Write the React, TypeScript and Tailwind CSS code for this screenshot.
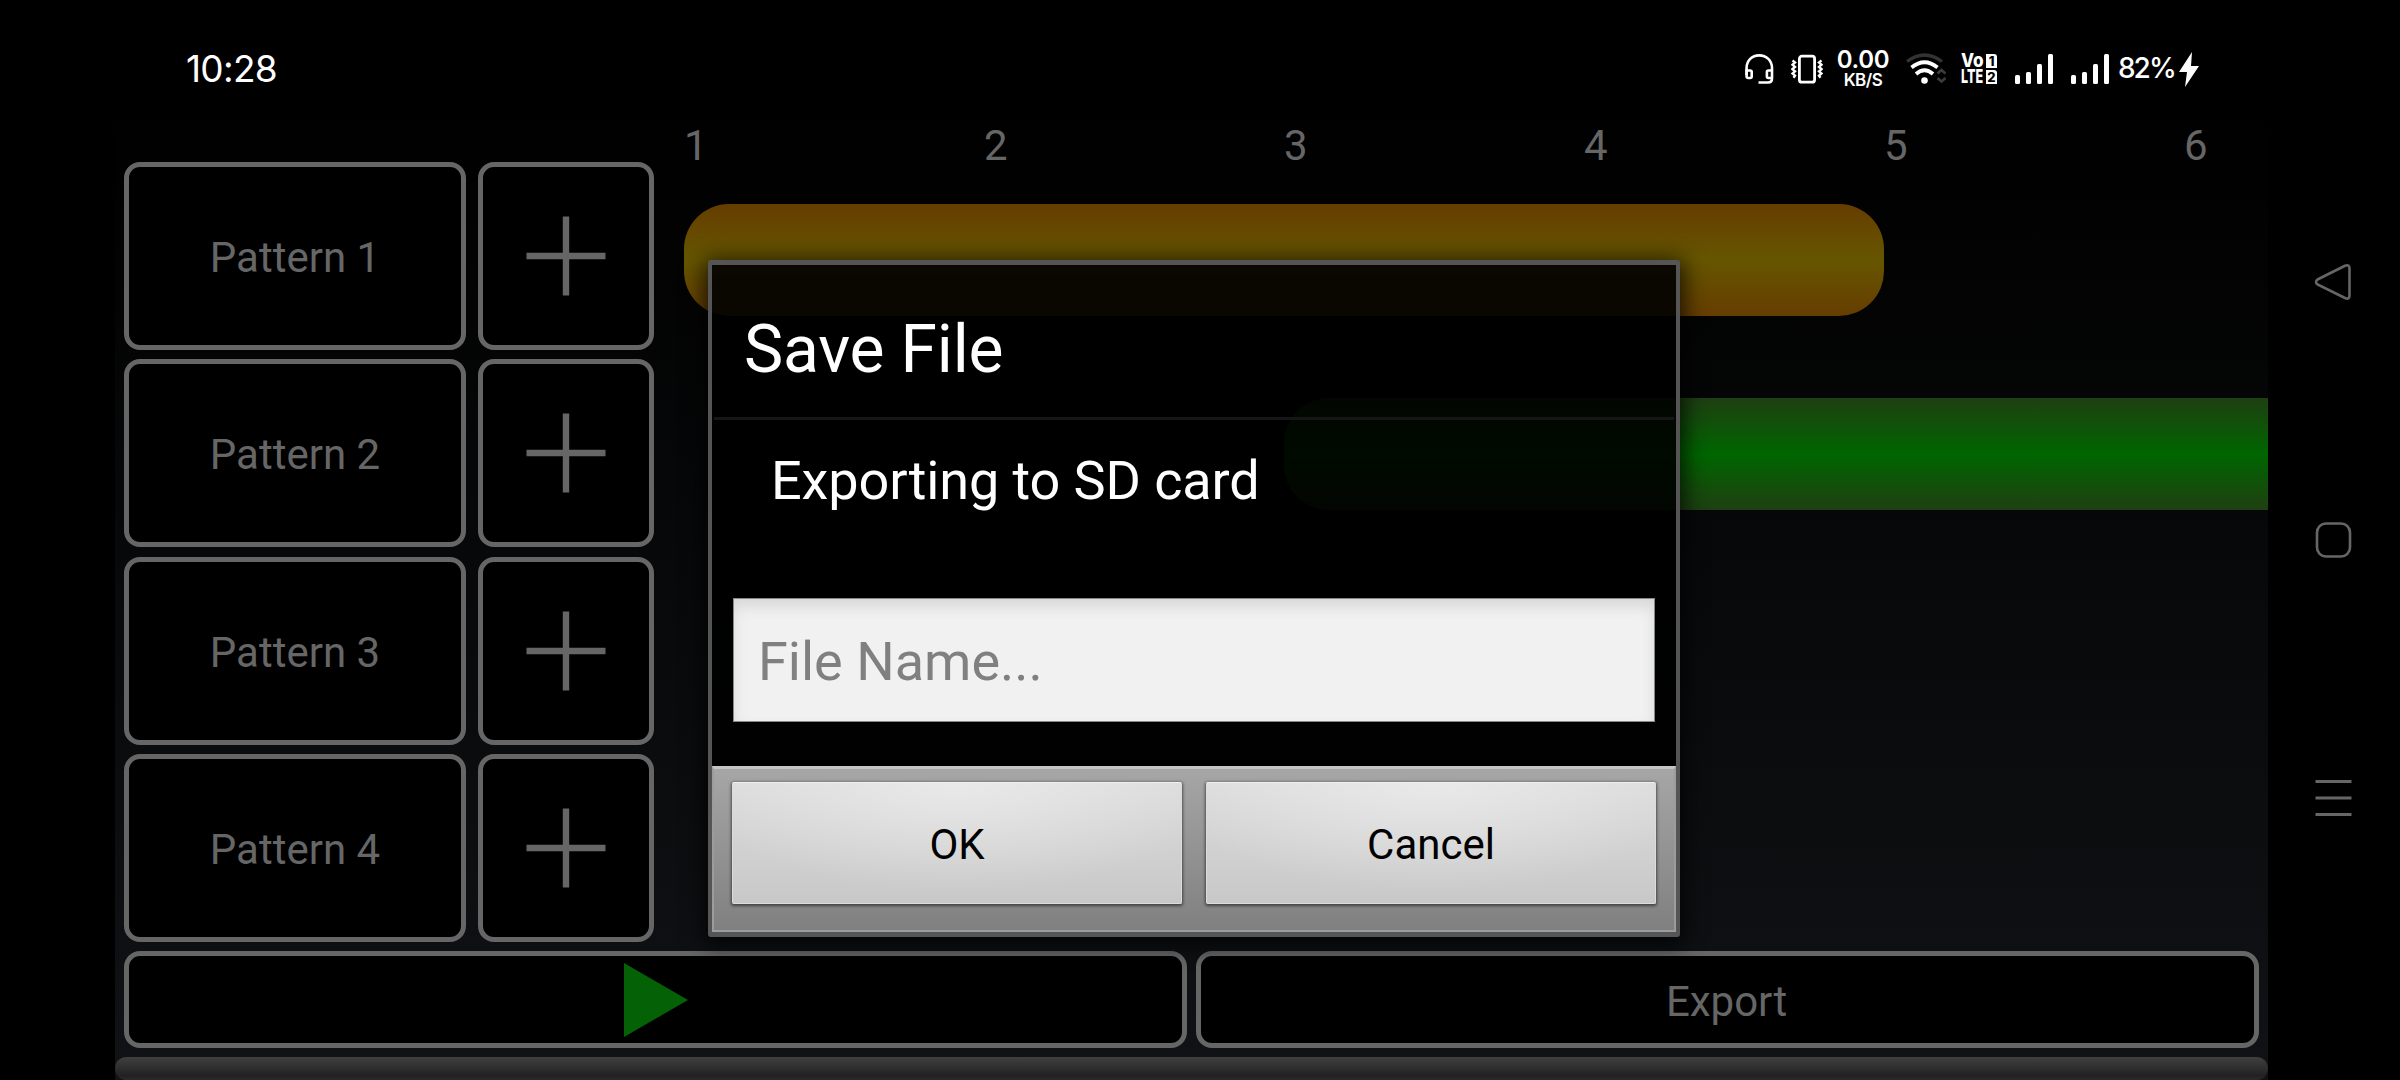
import React from 'react';

const roboto = "font-['Roboto','Liberation_Sans',sans-serif]";

const measures = [1, 2, 3, 4, 5, 6];
const patterns = ['Pattern 1', 'Pattern 2', 'Pattern 3', 'Pattern 4'];

function Headset() {
  return (
    <svg className="h-[30px] w-[29px] shrink-0" viewBox="0 0 29 30" fill="none" stroke="#fff" strokeWidth="2.6">
      <path d="M1.6 21V14C1.6 6.5 7 1.4 14.2 1.4S27 6.5 27 14V24.500C27 27.500 25.500 28.500 23 28.500H13.500" />
      <path d="M1.600 16.500H5.200Q6.700 16.500 6.700 18V22.500Q6.700 24 5.200 24H3.200Q1.600 24 1.600 22.500ZM27 16.500H23.400Q21.900 16.500 21.900 18V22.500Q21.900 24 23.400 24H27" />
    </svg>
  );
}

function Vibrate() {
  return (
    <svg className="h-[30px] w-[32px] shrink-0" viewBox="0 0 32 30" fill="none" stroke="#fff" strokeWidth="2.8">
      <rect x="8.400" y="2.200" width="15.200" height="26" rx="2.500" />
      <path d="M1.500 6.500l2.500 2-2.500 2.200 2.500 2.200-2.500 2.200 2.500 2.200-2.500 2.200 2.500 2.200-1.500 2M30.500 6.500l-2.500 2 2.500 2.200-2.500 2.200 2.500 2.200-2.500 2.200 2.500 2.200-2.500 2.200 1.500 2" strokeWidth="2.400" />
    </svg>
  );
}

function Wifi() {
  return (
    <svg className="h-[32px] w-[40px] shrink-0" viewBox="0 0 40 32" fill="none">
      <path d="M1 8.500Q18.500-4.500 36 8.500" stroke="#333" strokeWidth="3.400" />
      <path d="M5.500 14.500Q18.500 4 31.500 14.500" stroke="#fff" strokeWidth="3.800" />
      <path d="M10 21Q18.500 13.500 27 21" stroke="#fff" strokeWidth="3.800" />
      <circle cx="18.500" cy="27.500" r="3.300" fill="#fff" />
      <path d="M31.500 20.500l4-3.500 4 3.500M31.500 25l4 3.500 4-3.500" stroke="#3c3c3c" strokeWidth="2.600" />
    </svg>
  );
}

function Signal() {
  return (
    <svg className="h-[30px] w-[38px] shrink-0" viewBox="0 0 38 30" fill="#fff">
      <rect x="0" y="21" width="5" height="9" rx="1.500" />
      <rect x="11" y="18" width="5" height="12" rx="1.500" />
      <rect x="22" y="10" width="5" height="20" rx="1.500" />
      <rect x="33" y="0" width="5" height="30" rx="1.500" />
    </svg>
  );
}

function VoLte() {
  return (
    <div className="grid h-[31px] w-[36px] shrink-0 grid-cols-[22px_11px] grid-rows-[14px_14px] gap-x-[3px] gap-y-[2px] text-[19px] leading-[14px] font-extrabold">
      <span className="origin-left scale-x-[0.9]">Vo</span>
      <span className="rounded-tr-[3px] bg-white text-center text-[13px] text-black">1</span>
      <span className="origin-left scale-x-[0.66]">LTE</span>
      <span className="rounded-tr-[3px] bg-white text-center text-[13px] text-black">2</span>
    </div>
  );
}

function StatusBar() {
  return (
    <header className="flex h-[105px] shrink-0 items-start justify-between pr-[201px] pl-[186px] pt-[46px] font-['Inter','Roboto',sans-serif] text-white">
      <span className="mt-[3px] text-[37px] leading-[40px] tracking-[-0.7px]">10:28</span>
      <div className="flex items-start">
        <div className="mt-[8px]"><Headset /></div>
        <div className="mt-[8px] ml-[17px]"><Vibrate /></div>
        <div className="mt-[4px] ml-[14px] flex w-[52px] flex-col items-center font-semibold">
          <span className="text-[24px] leading-[20px] tracking-[-0.3px]">0.00</span>
          <span className="text-[17px] leading-[20px] tracking-[-0.5px]">KB/S</span>
        </div>
        <div className="mt-[7px] ml-[17px]"><Wifi /></div>
        <div className="mt-[8px] ml-[15px]"><VoLte /></div>
        <div className="mt-[8px] ml-[18px]"><Signal /></div>
        <div className="mt-[8px] ml-[18px]"><Signal /></div>
        <span className="ml-[9px] w-[57px] text-[28px] leading-[44px] font-medium tracking-[-2px] whitespace-nowrap">82%</span>
        <svg className="mt-[6px] ml-[4px] h-[35px] w-[20px] shrink-0" viewBox="0 0 20 35" fill="#fff">
          <path d="M13 0L0 20H8L6 35L20 14H12Z" />
        </svg>
      </div>
    </header>
  );
}

function PatternRow({ name }: { name: string }) {
  return (
    <div className="flex h-[188px] gap-3">
      <button className="w-[342px] rounded-[16px] border-5 border-[#666] bg-black pt-[3px] text-[42px]">{name}</button>
      <button className="flex w-[176px] items-center justify-center rounded-[16px] border-5 border-[#666] bg-black">
        <svg className="h-[80px] w-[80px]" viewBox="0 0 80 80" stroke="#666" strokeWidth="6.4">
          <path d="M0.500 40H79.500M40 0.500V79.500" />
        </svg>
      </button>
    </div>
  );
}

function Timeline() {
  return (
    <div className="flex min-w-0 grow flex-col pl-[30px]">
      <div className="flex h-[99px] shrink-0 pt-[16px] text-[42px] leading-[49px]">
        {measures.map((m) => (
          <span key={m} className="w-[300px] shrink-0">{m}</span>
        ))}
      </div>
      <div className="h-[112px] w-[1200px] shrink-0 rounded-[45px] bg-[linear-gradient(#663d00,#665600_50%,#663d00)]" />
      <div className="mt-[82px] ml-[600px] h-[112px] w-[984px] shrink-0 rounded-l-[45px] bg-[linear-gradient(#1f3f12,#006600_50%,#1f3f12)]" />
    </div>
  );
}

function Sequencer() {
  return (
    <main className="flex w-[2153px] flex-col bg-[linear-gradient(#000,#101215)] text-[#666]">
      <div className="flex h-[846px] shrink-0 overflow-hidden">
        <div className="flex w-[539px] shrink-0 flex-col gap-[9.3px] pt-[57px] pl-[9px]">
          {patterns.map((p) => (
            <PatternRow key={p} name={p} />
          ))}
        </div>
        <Timeline />
      </div>
      <div className="flex h-[97px] shrink-0 gap-[9px] px-[9px]">
        <button className="flex w-[1063px] items-center justify-center rounded-[16px] border-5 border-[#666] bg-black">
          <svg className="h-[74px] w-[64px]" viewBox="0 0 64 74" fill="#056105">
            <path d="M0 0L64 37L0 74Z" />
          </svg>
        </button>
        <button className="flex-1 rounded-[16px] border-5 border-[#666] bg-black pt-[3px] pr-[2px] text-[42px]">Export</button>
      </div>
      <div className="mt-[9px] h-[23px] shrink-0 rounded-[12px] bg-[linear-gradient(#404040,#222_80%,#2a2a2a)]" />
    </main>
  );
}

const dialogButton =
  'flex-1 rounded-[2px] border border-[#dcdcdc] border-t-[#f0f0f0] bg-[radial-gradient(ellipse_60%_90%_at_50%_0%,rgba(240,240,240,0.65),rgba(240,240,240,0)),linear-gradient(#dcdcdc,#c8c8c8)] bg-origin-border pt-[3px] text-[42px] text-black shadow-[0_1px_3px_1px_rgba(0,0,0,0.5)]';

function SaveDialog() {
  return (
    <div
      role="dialog"
      className="absolute top-[260px] left-[708px] flex h-[677px] w-[972px] flex-col rounded-[3px] border-x-4 border-y-5 border-[#555] bg-black/90 text-white shadow-[0_4px_22px_4px_rgba(0,0,0,0.75)]"
    >
      <h1 className="mx-[2px] h-[155px] border-b-3 border-[#161616] pt-[46px] pl-[30px] text-[66px] leading-[78px] tracking-[-0.2px]">Save File</h1>
      <p className="mt-[29px] ml-[59px] text-[54px] leading-[64px] tracking-[-0.1px]">Exporting to SD card</p>
      <input
        placeholder="File Name..."
        className="mx-[21px] mt-[85px] h-[124px] shrink-0 border border-[#888] bg-[#f1f1f1] pt-[3px] pl-[24px] text-[54px] shadow-[inset_0_8px_16px_-2px_rgba(0,0,0,0.12)] placeholder:text-[#808080]"
      />
      <div className="mt-auto flex h-[166px] gap-[24px] border-2 border-t-3 border-[#9c9c9c] border-t-[#c4c4c4] bg-[linear-gradient(#a6a6a6,#808080)] pt-[13px] pr-[18px] pb-[26px] pl-[18px]">
        <button className={dialogButton}>OK</button>
        <button className={dialogButton}>Cancel</button>
      </div>
    </div>
  );
}

function NavRail() {
  return (
    <nav className="flex w-[132px] flex-col items-center pt-[158px]">
      <svg className="h-[556px] w-[40px]" viewBox="0 0 40 556" fill="none" stroke="#666" strokeWidth="2.600">
        <path d="M3.500 16.500L31 2.800Q35.500 1 35.500 5.500V32.500Q35.500 37 31 35L3.500 21.500Q0.500 19 3.500 16.500Z" />
        <rect x="3" y="260.500" width="33" height="33" rx="9" />
        <path d="M1.500 518.500H37.500M1.500 535H37.500M1.500 551.500H37.500" strokeWidth="3" />
      </svg>
    </nav>
  );
}

export default function App() {
  return (
    <div className={`relative flex h-[1080px] w-[2400px] flex-col overflow-hidden bg-black ${roboto}`}>
      <StatusBar />
      <div className="flex grow pl-[115px]">
        <Sequencer />
        <NavRail />
      </div>
      <SaveDialog />
    </div>
  );
}
